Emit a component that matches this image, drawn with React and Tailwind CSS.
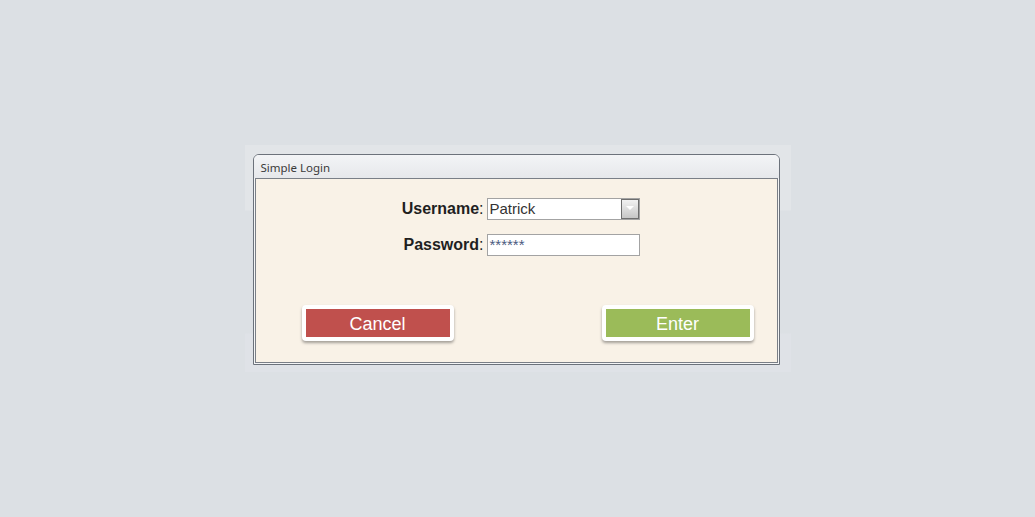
import React from 'react';

function Field({ label, children }) {
  return (
    <div className="flex items-center pl-[100px]">
      <div className="w-[128px] text-right text-[16px] leading-none text-[#1f1f1f]">
        <span className="font-bold">{label}</span>:
      </div>
      <div className="ml-[3px]">{children}</div>
    </div>
  );
}

export default function App() {
  return (
    <div className="h-[517px] w-full flex items-center justify-center bg-[#dce0e4] font-['Liberation_Sans',Arial,sans-serif]">
      <div className="pt-[9px] pl-[8px] pr-[11px] pb-[7px] bg-[linear-gradient(to_bottom,#e2e5e8_0px,#e2e5e8_65px,#dce0e4_66px,#dce0e4_188px,#dfe2e7_189px)]">
        <div className="w-[527px] border border-[#6c727b] rounded-t-[6px] bg-[#f4f5f6] overflow-hidden">
          <div className="h-[23px] flex items-center pl-[7px] pt-[2px] bg-[linear-gradient(to_bottom,#f3f4f6,#e6e8eb)] font-['Noto_Sans',sans-serif] text-[11.5px] text-[#3a3a3a]">
            Simple Login
          </div>
          <div className="mx-px mb-px border border-[#7a7f87] bg-[#f9f2e7] h-[185px] pt-[19px]">
            <Field label="Username">
              <div className="relative w-[153px] h-[22px] border border-[#a3a3a3] bg-white pl-[2px] flex items-center text-[15px] text-[#333]">
                Patrick
                <div className="absolute right-0 top-0 bottom-0 w-[18px] border border-[#6e6e6e] bg-[linear-gradient(to_bottom,#f2f2f2,#c6c6c6)] flex justify-center pt-[6px]">
                  <svg width="8" height="5" viewBox="0 0 8 5">
                    <path d="M0 0h8L4 4z" fill="#ffffff" />
                  </svg>
                </div>
              </div>
            </Field>
            <div className="mt-[14px]">
              <Field label="Password">
                <div className="w-[153px] h-[22px] border border-[#a3a3a3] bg-white pl-[2px] text-[15px] leading-[20px] text-[#4b5a80]">
                  ******
                </div>
              </Field>
            </div>
            <div className="flex mt-[49px]">
              <button className="ml-[46px] w-[152px] h-[36px] border-4 border-white rounded-[4px] bg-[#c0504d] shadow-[0_2px_3px_rgba(0,0,0,0.35)] text-white text-[18px] leading-none pt-px">
                Cancel
              </button>
              <button className="ml-auto mr-[23px] w-[152px] h-[36px] border-4 border-white rounded-[4px] bg-[#9bbb59] shadow-[0_2px_3px_rgba(0,0,0,0.35)] text-white text-[18px] leading-none pt-px">
                Enter
              </button>
            </div>
          </div>
        </div>
      </div>
    </div>
  );
}
